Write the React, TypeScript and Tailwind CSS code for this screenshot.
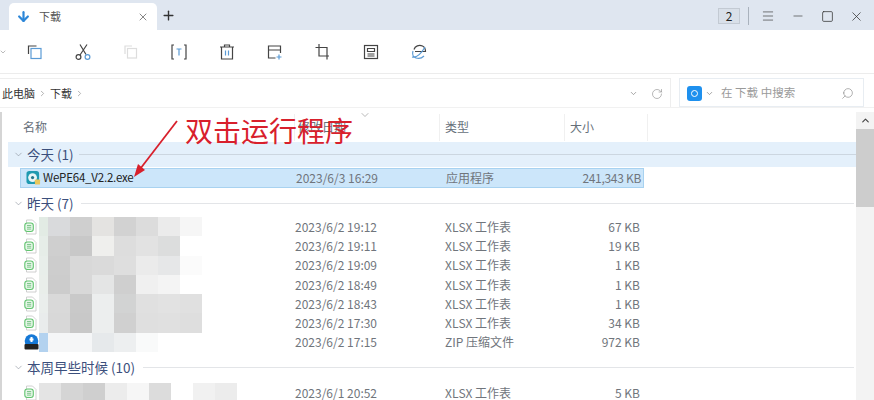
import { Search, RotateCw, ChevronDown, ChevronRight, ChevronUp, X, Plus, Minus, Square, Menu, ArrowDown } from 'lucide-react'

const FONT = 'font-["Noto_Sans_CJK_SC","Noto_Sans",sans-serif]'

const ROWS = [
  { date: '2023/6/2 19:12', type: 'XLSX 工作表', size: '67 KB', cells: ['#e2ebe4', '#d9dadc', '#cfcfcf', '#e4e3e1', '#d2d2d2', '#dcdcdc', '#ebebeb', '#f6f6f6'] },
  { date: '2023/6/2 19:11', type: 'XLSX 工作表', size: '19 KB', cells: ['#e6ede8', '#cfcfcf', '#c8c8c8', '#efefed', '#dddddd', '#e2e2e2', '#dcdddd', '#ffffff'] },
  { date: '2023/6/2 19:09', type: 'XLSX 工作表', size: '1 KB', cells: ['#e8eeea', '#cdcdcd', '#d8d8d8', '#dadada', '#dedede', '#ebebeb', '#e6e7e8', '#fbfbfb'] },
  { date: '2023/6/2 18:49', type: 'XLSX 工作表', size: '1 KB', cells: ['#e9eeea', '#cccccc', '#d8d8d8', '#e4e5e5', '#cfcfcf', '#f0f0f0', '#f4f4f4', '#ffffff'] },
  { date: '2023/6/2 18:43', type: 'XLSX 工作表', size: '1 KB', cells: ['#eaeeec', '#d9d9d9', '#c9c9c9', '#eceeee', '#d2d3d3', '#e0e0e0', '#e2e2e2', '#e0e0e0'] },
  { date: '2023/6/2 17:30', type: 'XLSX 工作表', size: '34 KB', cells: ['#e9ecec', '#d8d8d8', '#c8c8c8', '#eceeee', '#d0d0d0', '#dfdfdf', '#e0e0e0', '#dedede'] },
  { date: '2023/6/2 17:15', type: 'ZIP 压缩文件', size: '972 KB', zip: true, cells: ['#b3d2ef', '#f5f6f7', '#f5f6f7', '#e6e9eb', '#edeff0', '#f9fafa', '#ffffff', '#ffffff'] },
]

function XlsxIcon() {
  return (
    <svg width="14" height="16" viewBox="0 0 14 16" fill="none">
      <path d="M2.500 1h6l3.500 3.500V15h-9.500z" fill="#fff" stroke="#c4c4c4" strokeWidth="0.800" />
      <rect x="0.800" y="4" width="8.500" height="8.500" rx="2.500" fill="#e6f6e8" stroke="#62c470" strokeWidth="1.100" />
      <path d="M3 6.500h4.200M3 8.300h4.200M3 10.100h4.200" stroke="#55b365" strokeWidth="0.700" />
    </svg>
  )
}

function ZipIcon() {
  return (
    <svg width="15" height="16" viewBox="0 0 15 16">
      <circle cx="7.500" cy="7" r="6.800" fill="#1578d6" />
      <path d="M7.500 3v5M5.500 5.500h4" stroke="#fff" strokeWidth="2" />
      <rect x="0.500" y="10" width="14" height="5.500" rx="1" fill="#222" />
    </svg>
  )
}

function ExeIcon() {
  return (
    <svg width="16" height="16" viewBox="0 0 16 16">
      <rect x="0.500" y="0.500" width="13.500" height="14" rx="3" fill="#1f9ab0" />
      <circle cx="7" cy="7.500" r="4.700" fill="#e8f5f7" />
      <circle cx="7" cy="7.500" r="1.700" fill="#25768a" />
      <rect x="9.500" y="9.500" width="5.500" height="5.500" rx="1" fill="#e9c75c" />
    </svg>
  )
}

function ToolIcon({ children, x }: { children: React.ReactNode; x: string }) {
  return (
    <div className={`${x} flex h-[18px] w-[18px] shrink-0 items-center justify-center`}>
      <svg width="18" height="18" viewBox="0 0 18 18" fill="none" stroke="#444" strokeWidth="1.200">{children}</svg>
    </div>
  )
}

function Group({ label, width }: { label: string; width: string }) {
  return (
    <div className="flex h-[19px] items-center pl-[11px] pr-[2px]">
      <ChevronDown size={11} strokeWidth={1.200} className="text-[#7d8590]" />
      <span className={`${width} ml-[3px] shrink-0 whitespace-nowrap text-[13.500px] leading-none text-[#3b4f7c]`}>{label}</span>
      <div className="h-px flex-1 bg-[#e3e5e8]" />
    </div>
  )
}

function Row({ row }: { row: (typeof ROWS)[number] }) {
  return (
    <div className="flex h-[19.300px] items-center text-[12px]">
      <div className="ml-[22px] flex w-[15px] justify-start">{row.zip ? <ZipIcon /> : <XlsxIcon />}</div>
      <div className="flex h-full w-[256px] items-stretch">
        <div className="w-[9px]" style={{ background: row.cells[0] }} />
        {row.cells.slice(1).map((c, i) => (
          <div key={i} className="w-[22px]" style={{ background: c }} />
        ))}
      </div>
      <span className="w-[150px] shrink-0 text-[#70757c]">{row.date}</span>
      <span className="w-[120px] shrink-0 text-[#70757c]">{row.type}</span>
      <span className="w-[75px] shrink-0 text-right text-[#70757c]">{row.size}</span>
    </div>
  )
}

export default function App() {
  return (
    <div className={`${FONT} relative h-[400px] w-[874px] overflow-hidden bg-white`}>
      {/* title bar */}
      <div className="flex h-[30px] items-end bg-[#dfe6f0] pl-[9px]">
        <div className="flex h-[27px] w-[148px] items-center rounded-t-[5px] bg-white pl-[7px] pr-[8px]">
          <ArrowDown size={15} strokeWidth={3.500} className="text-[#2d87d8]" />
          <span className="ml-[8px] flex-1 text-[11px] text-[#555]">下载</span>
          <X size={12} strokeWidth={1.300} className="text-[#444]" />
        </div>
        <Plus size={15} strokeWidth={2.200} className="mb-[7px] ml-[4px] text-[#333]" />
        <div className="mb-[5px] ml-auto flex items-center pr-[10px]">
          <div className="flex h-[16px] w-[22px] items-center justify-center border border-[#c3cad3] bg-[#d9e0e9] text-[12px] text-[#222]">2</div>
          <div className="ml-[8px] mr-[12px] h-[18px] w-px bg-[#a9b2bd]" />
          <Menu size={14} strokeWidth={1.200} className="text-[#444]" />
          <Minus size={14} strokeWidth={1.200} className="ml-[16px] text-[#444]" />
          <Square size={13} strokeWidth={1.400} className="ml-[16px] text-[#333]" />
          <X size={15} strokeWidth={1.200} className="ml-[15px] text-[#333]" />
        </div>
      </div>

      {/* toolbar */}
      <div className="flex h-[44px] items-center border-b border-[#ececec]">
        <ChevronDown size={8} className="ml-[-1px] text-[#999]" />
        <ToolIcon x="ml-[19px]">
          <path d="M2.500 11V3h8" stroke="#444" />
          <rect x="5" y="5.500" width="10" height="10" stroke="#5b9bd5" />
        </ToolIcon>
        <ToolIcon x="ml-[30px]">
          <path d="M13 1.500 6 12M6 1.500l6 10" />
          <circle cx="4.500" cy="14" r="2.400" />
          <circle cx="13.500" cy="14" r="2.400" stroke="#5b9bd5" />
        </ToolIcon>
        <ToolIcon x="ml-[30px]">
          <path d="M3 11V3h7" stroke="#ddd" />
          <rect x="5.500" y="5.500" width="9" height="9.500" stroke="#ddd" />
        </ToolIcon>
        <ToolIcon x="ml-[30px]">
          <path d="M4 2H2v14h2M14 2h2v14h-2" />
          <path d="M6.500 6h5M9 6v6.500" stroke="#5b9bd5" />
        </ToolIcon>
        <ToolIcon x="ml-[30px]">
          <path d="M2 4h14M6.500 4V2h5v2M3.500 4v12h11V4" />
          <path d="M7.500 7.500v5M10.500 7.500v5" stroke="#5b9bd5" />
        </ToolIcon>
        <ToolIcon x="ml-[30px]">
          <path d="M9.500 15H2.500V3h12v7M2.500 7h12" />
          <path d="M13 11.500v5M10.500 14h5" stroke="#5b9bd5" />
        </ToolIcon>
        <ToolIcon x="ml-[30px]">
          <path d="M5 1v12h10M1.500 4.500H13v12" />
        </ToolIcon>
        <ToolIcon x="ml-[30px]">
          <rect x="2.500" y="2.500" width="13" height="13" />
          <path d="M5.500 5.500h7v3h-7zM5.500 11h7M5.500 13h7" />
        </ToolIcon>
        <ToolIcon x="ml-[30px]">
          <path d="M4 6.500C5 3 9 1.500 12.500 3c2 1 3 3 3 5.500H5" />
          <path d="M3 8c-1 3 0 6 3 7 3 1 6 0 8-2M2 14c4 1 9-3 13-10" stroke="#5b9bd5" />
        </ToolIcon>
      </div>

      {/* address bar */}
      <div className="mt-[4px] flex h-[30px] gap-[8px] border-b border-[#f1f1f1] pr-[10px]">
        <div className="flex flex-1 items-center border-r border-t border-[#eee] bg-white pl-[2px] pt-[1px] text-[11px] text-[#333]">
          <span>此电脑</span>
          <ChevronRight size={9} className="mx-[3px] text-[#999]" />
          <span>下载</span>
          <ChevronRight size={9} className="ml-[3px] text-[#999]" />
          <ChevronDown size={9} className="ml-auto text-[#888]" />
          <RotateCw size={12} strokeWidth={1.400} className="ml-[13px] mr-[7px] text-[#999]" />
        </div>
        <div className="flex w-[185px] items-center border border-[#e8edf2] pl-[7px] pr-[9px] pt-[1px] text-[11.500px] text-[#9a9a9a]">
          <div className="relative flex h-[15px] w-[15px] items-center justify-center rounded-[3px] bg-[#1e90ee]">
            <div className="h-[7px] w-[7px] rounded-full border border-white" />
          </div>
          <ChevronDown size={9} className="ml-[3px] text-[#888]" />
          <span className="ml-[7px] whitespace-pre">在 下载 中搜索</span>
          <Search size={13} strokeWidth={1.200} className="ml-auto -scale-x-100 text-[#888]" />
        </div>
      </div>

      <div className="mt-[4px] flex">
        {/* list */}
        <div className="min-w-0 flex-1 border-l-2 border-[#d5d5d5]">
          <div className="flex h-[30px] items-center text-[12px] text-[#666f7a]">
            <span className="ml-[21px] w-[271px]">名称</span>
            <div className="flex h-[27px] w-[145px] items-center border-l border-[#f0f0f0] pl-[3px]">修改日期</div>
            <div className="flex h-[27px] w-[125px] items-center border-l border-[#f0f0f0] pl-[5px]">类型</div>
            <div className="flex h-[27px] w-[84px] items-center border-x border-[#f0f0f0] pl-[5px]">大小</div>
          </div>
          <div className="ml-[6px] flex h-[25px] items-center bg-[#e4f0fb] pl-[5px]">
            <ChevronDown size={11} strokeWidth={1.200} className="text-[#7d8590]" />
            <span className="ml-[3px] w-[52px] shrink-0 whitespace-nowrap text-[13.500px] leading-none text-[#3b4f7c]">今天 (1)</span>
            <div className="h-px flex-1 bg-[#ccd6e0]" />
          </div>
          <div className="ml-[18px] mt-[1px] flex h-[20px] w-[624px] items-center border border-[#a8d2f0] bg-[#cce6fa] text-[12px]">
            <div className="ml-[5px] flex w-[15px] justify-center"><ExeIcon /></div>
            <span className="ml-[2px] w-[253px] text-[11.500px] tracking-[-0.200px] text-[#222]">WePE64_V2.2.exe</span>
            <span className="w-[150px] text-[#70757c]">2023/6/3 16:29</span>
            <span className="w-[121px] text-[#70757c]">应用程序</span>
            <span className="w-[74px] text-right tracking-[-0.300px] text-[#70757c]">241,343 KB</span>
          </div>
          <div className="mt-[6px]" />
          <Group label="昨天 (7)" width="w-[54px]" />
          <div className="mt-[4px]">
            {ROWS.map(r => <Row key={r.date} row={r} />)}
          </div>
          <div className="mt-[6px]" />
          <Group label="本周早些时候 (10)" width="w-[116px]" />
          <div className="mt-[6px] flex h-[19px] items-center text-[12px] text-[#70757c]">
            <div className="ml-[22px] flex w-[15px] justify-start"><XlsxIcon /></div>
            <div className="flex h-full w-[256px]">
              {['#e4e4e4', '#d5d5d5', '#cfcfcf', '#ececec', '#f6f6f6', '#dcdcdc', '#ffffff', '#f1f1f1', '#ececec'].map((c, i) => (
                <div key={i} className="w-[22px] shrink-0" style={{ background: c }} />
              ))}
            </div>
            <span className="w-[150px]">2023/6/1 20:52</span>
            <span className="w-[120px]">XLSX 工作表</span>
            <span className="w-[75px] text-right">5 KB</span>
          </div>
        </div>

        {/* scrollbar */}
        <div className="w-[18px] shrink-0 bg-[#f3f3f3]">
          <div className="flex h-[17px] items-center justify-center">
            <ChevronUp size={11} strokeWidth={2.500} className="text-[#444]" />
          </div>
          <div className="h-[78px] bg-[#cdcdcd]" />
        </div>
      </div>

      {/* annotation over the list */}
      <span className="absolute left-[185px] top-[109px] text-[28px] leading-[42px] text-[#d8202c]">双击运行程序</span>
      <ChevronDown size={12} strokeWidth={1.200} className="absolute left-[359px] top-[109px] text-[#888]" />
      <svg className="absolute left-[130px] top-[118px]" width="52" height="64" viewBox="0 0 52 64" fill="none">
        <path d="M47 3 7 55" stroke="#d8202c" strokeWidth="1.800" />
        <path d="M4 59 8 46l7 6z" fill="#d8202c" />
      </svg>
    </div>
  )
}
